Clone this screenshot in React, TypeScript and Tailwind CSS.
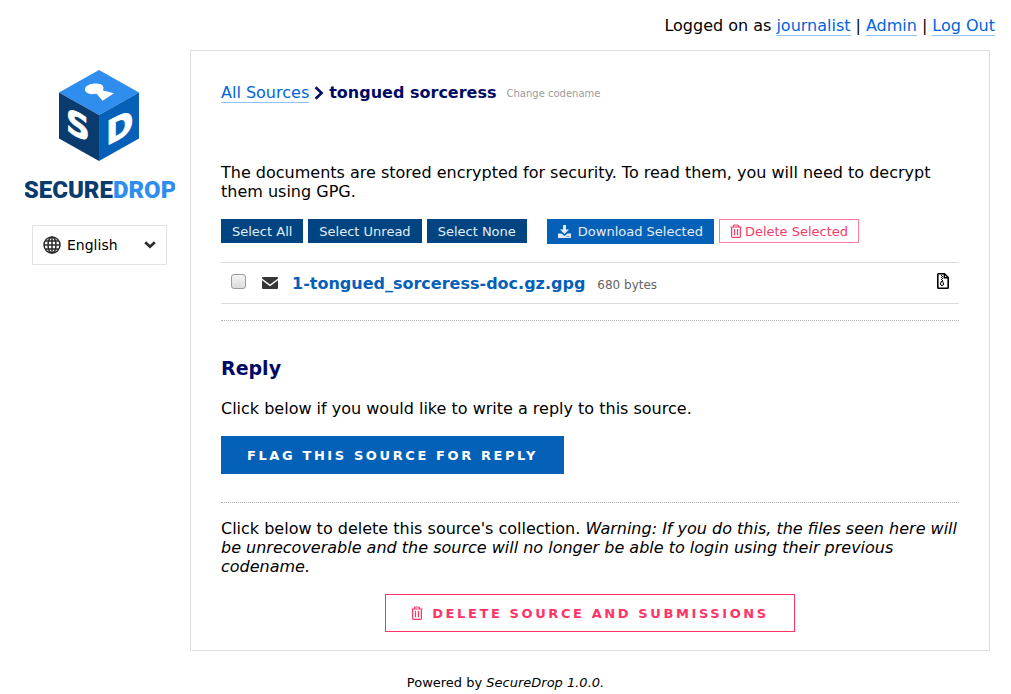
import type { ReactNode } from "react";

function Logo() {
  return (
    <svg viewBox="0 0 150 136" className="h-[136px] w-[150px]" role="img" aria-label="SecureDrop">
      <path d="M74 0 114 22.5 74 45 34 22.5Z" fill="#2f8ded" />
      <path d="M34 22.5 74 45V91L34 68.5Z" fill="#0a3b6e" />
      <path d="M74 45 114 22.5V68.5L74 91Z" fill="#0560b8" />
      <path d="M78 16.4C77 12.8 68 12.8 62.5 15.5C57.5 18.5 60 23.8 66.5 24.2L71.5 23.8L77.6 30.8L89 23.2L77.5 20.2C78.6 19 78.8 17.8 78 16.4Z" fill="#fff" />
      <g fill="#fff" stroke="#fff" strokeWidth="0.8" fontFamily="'DejaVu Sans', sans-serif" fontWeight="700" fontSize="33">
        <text transform="translate(41 61) skewY(26)">S</text>
        <text transform="translate(81 76) skewY(-27)">D</text>
      </g>
      <text x="75" y="128" textAnchor="middle" fontFamily="Roboto, sans-serif" fontWeight="900" fontSize="24">
        <tspan fill="#0a3b6e">SECURE</tspan>
        <tspan fill="#2f8ded">DROP</tspan>
      </text>
    </svg>
  );
}

function GlobeIcon() {
  return (
    <svg viewBox="0 0 18 18" className="size-[18px] shrink-0" fill="none" stroke="#2b2b2b" strokeWidth="1.5" aria-hidden="true">
      <circle cx="9" cy="9" r="8" />
      <ellipse cx="9" cy="9" rx="4" ry="8" />
      <path d="M9 1V17M1 9H17M2.4 5H15.6M2.4 13H15.6" />
    </svg>
  );
}

function ChevronDownIcon() {
  return (
    <svg viewBox="0 0 12 8" className="h-2 w-3 shrink-0" fill="none" stroke="#2b2b2b" strokeWidth="2.6" aria-hidden="true">
      <path d="M1.2 1.3 6 5.8 10.8 1.3" />
    </svg>
  );
}

function ChevronRightIcon() {
  return (
    <svg viewBox="0 0 10 14" className="h-3.5 w-2.5 shrink-0" fill="none" stroke="#000a66" strokeWidth="2.6" aria-hidden="true">
      <path d="M1.6 1.2 7.6 7 1.6 12.8" />
    </svg>
  );
}

function DownloadIcon() {
  return (
    <svg viewBox="0 0 13 13" className="size-[13px] shrink-0" fill="#e3edf7" aria-hidden="true">
      <path d="M5 0H8V4.5H11L6.5 9 2 4.5H5Z" />
      <path fillRule="evenodd" d="M0 8.5H3.5L6.5 11 9.5 8.5H13V13H0ZM8.5 11V12H9.5V11ZM10.5 11V12H11.5V11Z" />
    </svg>
  );
}

function TrashIcon({ className = "" }: { className?: string }) {
  return (
    <svg viewBox="0 0 12 14" className={"h-3.5 w-3 shrink-0 " + className} fill="none" stroke="currentColor" strokeWidth="1.2" aria-hidden="true">
      <path d="M0.5 3H11.5M3.5 3V2Q3.5 1 4.5 1H7.5Q8.5 1 8.5 2V3M1.6 3V12.2Q1.6 13.3 2.7 13.3H9.3Q10.4 13.3 10.4 12.2V3" />
      <path d="M4.5 5V11.2M7.5 5V11.2" />
    </svg>
  );
}

function EnvelopeIcon() {
  return (
    <svg viewBox="0 0 16 12" className="block h-3 w-4" fill="#363636" aria-label="Unread" role="img">
      <path d="M1 0H15Q16 0 16 1V1.6L8 7.6 0 1.6V1Q0 0 1 0Z" />
      <path d="M0 3.3 8 9.2 16 3.3V11Q16 12 15 12H1Q0 12 0 11Z" />
    </svg>
  );
}

function ArchiveIcon() {
  return (
    <svg viewBox="0 0 12 16" className="ml-auto block h-4 w-3" aria-label="Archive" role="img">
      <path d="M1.5 0.8H7.5L11.2 4.5V14.5Q11.2 15.2 10.5 15.2H1.5Q0.8 15.2 0.8 14.5V1.5Q0.8 0.8 1.5 0.8Z" fill="#fff" stroke="#000" strokeWidth="1.6" />
      <path d="M7.3 1V4.7H11" fill="none" stroke="#000" strokeWidth="1.4" />
      <path d="M4 2H5V3H4ZM5 3H6V4H5ZM4 4H5V5H4ZM5 5H6V6H5ZM4 6H5V7H4ZM5 7H6V8H5Z" />
      <path d="M4.2 8.5H5.8L6.5 11Q6.5 12.5 5 12.5T3.5 11Z" fill="none" stroke="#000" />
    </svg>
  );
}

function TextLink({ children }: { children: ReactNode }) {
  return (
    <a href="#" className="border-b border-[#92c1f5] text-[#0065db]">
      {children}
    </a>
  );
}

function SelectButton({ children }: { children: ReactNode }) {
  return (
    <button type="button" className="h-6 bg-[#004581] px-[11px] text-[#e3edf7]">
      {children}
    </button>
  );
}

export default function App() {
  return (
    <div className="bg-white font-['DejaVu_Sans',sans-serif] text-[16px] leading-[19px] text-black">
      <header className="flex h-[50px] items-start justify-end gap-[5px] pt-4 pr-4">
        <span>Logged on as</span>
        <TextLink>journalist</TextLink>
        <span>|</span>
        <TextLink>Admin</TextLink>
        <span>|</span>
        <TextLink>Log Out</TextLink>
      </header>

      <div className="flex items-start pr-[21px]">
        <aside className="w-[190px] shrink-0 pt-5 pl-[25px]">
          <a href="#" className="block w-[150px]">
            <Logo />
          </a>
          <div className="mt-[19px] ml-[7px] flex h-10 w-[135px] items-center border border-[#e3e3e3] px-2.5">
            <GlobeIcon />
            <select aria-label="Language" defaultValue="en" className="ml-1.5 min-w-0 flex-1 appearance-none bg-transparent text-[14px] text-black">
              <option value="en">English</option>
            </select>
            <ChevronDownIcon />
          </div>
        </aside>

        <main className="min-w-0 flex-1 border border-[#dedede] px-[30px] pt-8 pb-[18px]">
          <nav className="flex items-start" aria-label="Breadcrumb">
            <TextLink>All Sources</TextLink>
            <span className="mx-[5px] flex h-[19px] items-center">
              <ChevronRightIcon />
            </span>
            <h1 className="font-bold text-[#000a66]">tongued sorceress</h1>
            <a href="#" className="ml-2.5 pt-[3px] text-[10px] leading-4 text-[#9b9b9b]">
              Change codename
            </a>
          </nav>

          <p className="mt-[60px]">
            The documents are stored encrypted for security. To read them, you will need to decrypt them using GPG.
          </p>

          <div className="mt-[18px] flex flex-wrap items-start gap-[5px] text-[13px]">
            <SelectButton>Select All</SelectButton>
            <SelectButton>Select Unread</SelectButton>
            <SelectButton>Select None</SelectButton>
            <button type="button" className="ml-[15px] flex h-[25px] items-center gap-[7px] bg-[#0560b8] px-[11px] text-[#e3edf7]">
              <DownloadIcon />
              Download Selected
            </button>
            <button type="button" className="flex h-6 items-center gap-[3px] border border-[#ff7c9f] px-2.5 text-[#f13c6b]">
              <TrashIcon />
              Delete Selected
            </button>
          </div>

          <table className="mt-[18px] w-full border-y border-[#dcdcdc]">
            <tbody>
              <tr className="h-[41px]">
                <td className="w-[41px] pb-1 pl-2.5">
                  <input
                    type="checkbox"
                    aria-label="Select 1-tongued_sorceress-doc.gz.gpg"
                    className="block size-[15px] appearance-none rounded-[3px] border border-[#9b9b9b] bg-linear-to-b from-[#f4f4f4] to-[#dcdcdc]"
                  />
                </td>
                <td className="w-[30px]">
                  <EnvelopeIcon />
                </td>
                <td className="pt-0.5">
                  <a href="#" className="font-bold text-[#0560b8]">
                    1-tongued_sorceress-doc.gz.gpg
                  </a>
                  <span className="ml-3 text-[12px] text-[#636363]">680 bytes</span>
                </td>
                <td className="w-[40px] pr-2.5 pb-1">
                  <ArchiveIcon />
                </td>
              </tr>
            </tbody>
          </table>

          <hr className="mt-4 border-t border-dotted border-[#b5b5b5]" />

          <h2 className="mt-9 text-[19px] leading-[22px] font-bold text-[#000a66]">Reply</h2>
          <p className="mt-5">Click below if you would like to write a reply to this source.</p>
          <button type="button" className="mt-[18px] block h-[38px] bg-[#0560b8] px-[26px] text-[13px] font-bold tracking-[0.2em] text-white uppercase">
            Flag this source for reply
          </button>

          <hr className="mt-7 border-t border-dotted border-[#b5b5b5]" />

          <p className="mt-4">
            Click below to delete this source's collection.{" "}
            <em>
              Warning: If you do this, the files seen here will be unrecoverable and the source will no longer be able to login using their previous codename.
            </em>
          </p>
          <button type="button" className="mx-auto mt-[18px] flex h-[38px] items-center border border-[#ff3366] px-[25px] text-[13px] font-bold tracking-[0.2em] text-[#ff3366] uppercase">
            <TrashIcon className="mr-[9px]" />
            Delete source and submissions
          </button>
        </main>
      </div>

      <footer className="pt-[22px] text-center text-[13px]">
        Powered by <em>SecureDrop 1.0.0.</em>
      </footer>
    </div>
  );
}
